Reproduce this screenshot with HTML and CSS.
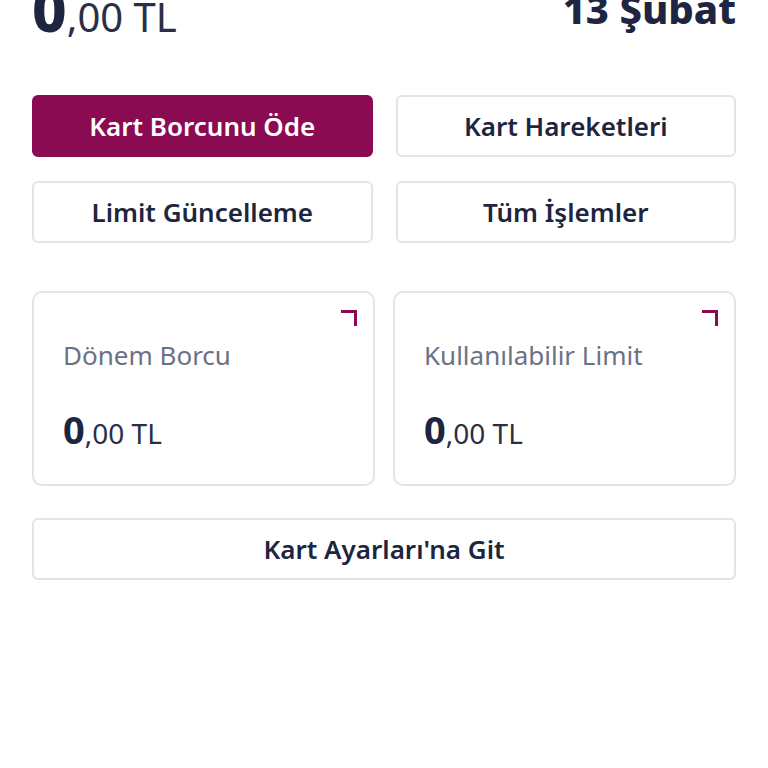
FILE: index.html
```html
<!DOCTYPE html>
<html lang="tr">
<head>
  <meta charset="UTF-8">
  <meta name="viewport" content="width=device-width, initial-scale=1.0">
  <title>Kart Detayı</title>
  <link rel="stylesheet" href="styles.css">
</head>
<body>
  <div class="summary">
    <div class="total"><span class="int">0</span>,00 TL</div>
    <div class="due">13 Şubat</div>
  </div>

  <div class="actions">
    <button class="btn primary">Kart Borcunu Öde</button>
    <button class="btn">Kart Hareketleri</button>
    <button class="btn">Limit Güncelleme</button>
    <button class="btn">Tüm İşlemler</button>
  </div>

  <div class="cards">
    <div class="card">
      <span class="corner"></span>
      <div class="label">Dönem Borcu</div>
      <div class="amount"><span class="int">0</span>,00 TL</div>
    </div>
    <div class="card">
      <span class="corner"></span>
      <div class="label">Kullanılabilir Limit</div>
      <div class="amount"><span class="int">0</span>,00 TL</div>
    </div>
  </div>

  <button class="btn wide">Kart Ayarları'na Git</button>
</body>
</html>
```

FILE: styles.css
```css
body {
  margin: 0;
  padding: 0 32px;
  background-color: #fff;
  color: #1e2540;
  font-family: "Noto Sans", Lato, sans-serif;
}
.summary {
  display: flex;
  justify-content: space-between;
  align-items: flex-start;
  margin-top: -22px;
  height: 117px;
}
.total {
  font-size: 40px;
  line-height: 62px;
  color: #2a2f45;
}
.total .int {
  font-size: 60px;
  font-weight: 800;
  color: #1e2540;
}
.due {
  font-size: 40px;
  font-weight: 800;
  line-height: 62px;
}
.actions {
  display: grid;
  grid-template-columns: 1fr 1fr;
  column-gap: 23px;
  row-gap: 24px;
}
.btn {
  height: 62px;
  border: 2px solid #e3e4e9;
  border-radius: 6px;
  background-color: #fff;
  color: #1e2540;
  font-family: inherit;
  font-size: 26px;
  font-weight: 600;
  cursor: pointer;
}
.btn.primary {
  background-color: #8b0b52;
  border-color: #8b0b52;
  color: #fff;
}
.cards {
  display: grid;
  grid-template-columns: 1fr 1fr;
  gap: 18px;
  margin-top: 48px;
}
.card {
  position: relative;
  height: 195px;
  box-sizing: border-box;
  border: 2px solid #e3e4e9;
  border-radius: 10px;
  padding: 44px 29px 0;
}
.corner {
  position: absolute;
  top: 17px;
  right: 16px;
  width: 13px;
  height: 13px;
  border-top: 3px solid #8b0b52;
  border-right: 3px solid #8b0b52;
}
.label {
  font-size: 26px;
  color: #6c7183;
}
.amount {
  margin-top: 30px;
  font-size: 28px;
  color: #2a2f45;
}
.amount .int {
  font-size: 38px;
  font-weight: 700;
  color: #1e2540;
}
.wide {
  display: block;
  width: 100%;
  margin-top: 32px;
}
```
